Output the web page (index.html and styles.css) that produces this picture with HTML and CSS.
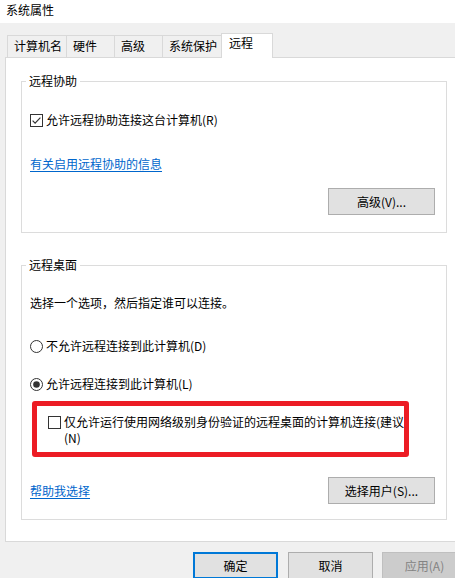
FILE: index.html
```html
<!DOCTYPE html>
<html lang="zh-CN">
<head>
<meta charset="utf-8">
<title>系统属性</title>
<link rel="stylesheet" href="styles.css">
</head>
<body>
<div class="titlebar">系统属性</div>
<div class="tabs">
  <div class="tab tab-first w60">计算机名</div>
  <div class="tab w48">硬件</div>
  <div class="tab w48">高级</div>
  <div class="tab w59">系统保护</div>
  <div class="tab tab-active">远程</div>
</div>
<div class="panel">
  <fieldset class="group group-assist">
    <legend>远程协助</legend>
    <label class="row row-check">
      <svg class="box" width="13" height="13" viewBox="0 0 13 13"><rect x="0.5" y="0.5" width="12" height="12" fill="#fff" stroke="#333"/><path d="M2.6 6.6 L5.1 9.1 L10.4 3.6" fill="none" stroke="#333" stroke-width="1.2"/></svg>
      <span>允许远程协助连接这台计算机(R)</span>
    </label>
    <a class="link link-info" href="#">有关启用远程协助的信息</a>
    <div class="btn-row btn-row-assist">
      <button class="btn">高级(V)...</button>
    </div>
  </fieldset>
  <fieldset class="group group-desktop">
    <legend>远程桌面</legend>
    <p class="desc">选择一个选项，然后指定谁可以连接。</p>
    <label class="row radio-1">
      <svg class="box" width="13" height="13" viewBox="0 0 13 13"><circle cx="6.5" cy="6.5" r="6" fill="#fff" stroke="#333"/></svg>
      <span>不允许远程连接到此计算机(D)</span>
    </label>
    <label class="row radio-2">
      <svg class="box" width="13" height="13" viewBox="0 0 13 13"><circle cx="6.5" cy="6.5" r="6" fill="#fff" stroke="#333"/><circle cx="6.5" cy="6.5" r="3.3" fill="#333"/></svg>
      <span>允许远程连接到此计算机(L)</span>
    </label>
    <div class="highlight">
      <label class="nla">
        <svg class="box nla-box" width="13" height="13" viewBox="0 0 13 13"><rect x="0.5" y="0.5" width="12" height="12" fill="#fff" stroke="#333"/></svg>
        <span class="nla-text"><span class="nla-line">仅允许运行使用网络级别身份验证的远程桌面的计算机连接(建议)</span><span class="nla-line">(N)</span></span>
      </label>
    </div>
    <div class="btn-row btn-row-desktop">
      <a class="link" href="#">帮助我选择</a>
      <button class="btn">选择用户(S)...</button>
    </div>
  </fieldset>
</div>
<div class="footer">
  <button class="btn btn-ok">确定</button>
  <button class="btn btn-cancel">取消</button>
  <button class="btn btn-apply">应用(A)</button>
</div>
</body>
</html>
```
FILE: styles.css
```css
* { box-sizing: border-box; }
html, body {
  margin: 0;
  padding: 0;
  width: 455px;
  height: 578px;
  overflow: hidden;
}
body {
  background: #f0f0f0;
  font-family: "Noto Sans CJK SC", "Microsoft YaHei", sans-serif;
  font-size: 12px;
  line-height: 16px;
  color: #000;
}
.titlebar {
  height: 23px;
  background: #fff;
  padding: 2px 0 0 6px;
}
.tabs {
  margin-top: 10px;
  height: 24px;
  padding-left: 7px;
  display: flex;
  align-items: flex-end;
}
.tab {
  height: 22px;
  border-top: 1px solid #d9d9d9;
  border-right: 1px solid #d9d9d9;
  padding: 2px 0 0 6px;
  background: #f0f0f0;
  white-space: nowrap;
}
.tab-first { border-left: 1px solid #d9d9d9; }
.w60 { width: 60px; }
.w48 { width: 48px; }
.w59 { width: 59px; }
.tab-active {
  position: relative;
  z-index: 1;
  width: 52px;
  height: 25px;
  margin-left: -1px;
  margin-bottom: -1px;
  border-left: 1px solid #d9d9d9;
  background: #fff;
  padding: 1px 0 0 7px;
}
.panel {
  margin-left: 5px;
  width: 470px;
  height: 485px;
  background: #fff;
  border: 1px solid #d9d9d9;
  padding: 15px 0 0 15px;
}
.group {
  margin: 0;
  width: 426px;
  border: 1px solid #dcdcdc;
  padding: 0 0 0 8px;
  min-inline-size: 0;
}
.group legend {
  padding: 0 3px;
  margin-left: -4px;
  line-height: 16px;
  height: 16px;
}
.group-assist { padding-bottom: 17px; }
.group-desktop { margin-top: 24px; padding-bottom: 15px; }
.row {
  display: flex;
  align-items: center;
  height: 16px;
}
.box { flex: none; display: block; margin-right: 3px; }
.row-check { margin-top: 23px; }
.link {
  display: inline-block;
  color: #0066cc;
  text-decoration: underline;
  text-underline-offset: 2px;
}
.link-info { margin-top: 28px; }
.btn-row {
  display: flex;
  justify-content: flex-end;
  align-items: center;
  padding-right: 11px;
}
.btn-row-assist { margin-top: 16px; }
.btn-row-desktop {
  margin-top: 20px;
  justify-content: space-between;
}
.btn {
  font: inherit;
  color: #000;
  width: 107px;
  height: 27px;
  background: #e1e1e1;
  border: 1px solid #adadad;
  padding: 0;
  margin: 0;
}
.desc { margin: 22px 0 0 0; }
.radio-1 { margin-top: 27px; }
.radio-2 { margin-top: 22px; }
.highlight {
  margin: 9px 0 0 2px;
  width: 377px;
  height: 56px;
  border: 5px solid #ec1c24;
  border-radius: 3px;
  padding: 8px 0 6px 11px;
  overflow: hidden;
}
.nla {
  display: flex;
  align-items: flex-start;
}
.nla-box { margin-top: 2px; }
.nla-text {
  display: flex;
  flex-direction: column;
  white-space: nowrap;
}
.footer {
  margin-top: 10px;
  padding-left: 193px;
  display: flex;
}
.footer .btn { width: 85px; flex: none; }
.btn-ok { border: 2px solid #0078d7; }
.btn-cancel { margin-left: 10px; }
.btn-apply {
  margin-left: 9px;
  background: #cccccc;
  border-color: #bfbfbf;
  color: #838383;
}
```
